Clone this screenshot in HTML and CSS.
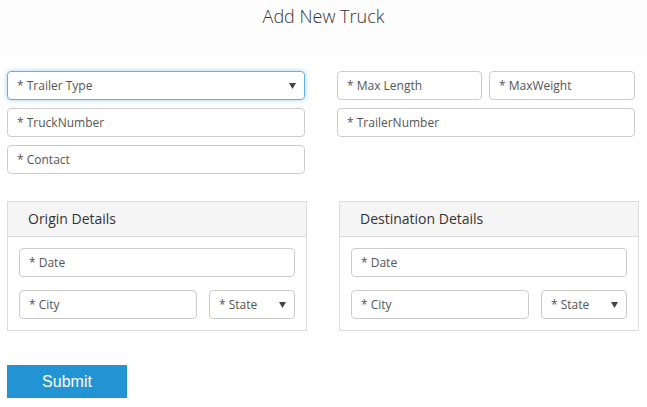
FILE: index.html
```html
<!DOCTYPE html>
<html lang="en">
<head>
<meta charset="utf-8">
<title>Add New Truck</title>
<link rel="stylesheet" href="styles.css">
</head>
<body>
<header class="title-bar">
  <h1>Add New Truck</h1>
</header>
<form class="truck-form">
  <div class="top-grid">
    <div class="col">
      <div class="field select focused"><span>* Trailer Type</span><svg class="arrow" width="7" height="6" viewBox="0 0 7 6"><path d="M0 0H7L3.5 6Z" fill="#444"/></svg></div>
      <input class="field" type="text" placeholder="* TruckNumber">
      <input class="field" type="text" placeholder="* Contact">
    </div>
    <div class="col">
      <div class="pair">
        <input class="field" type="text" placeholder="* Max Length">
        <input class="field" type="text" placeholder="* MaxWeight">
      </div>
      <input class="field" type="text" placeholder="* TrailerNumber">
    </div>
  </div>

  <div class="panel-grid">
    <section class="panel">
      <div class="panel-head">Origin Details</div>
      <div class="panel-body">
        <input class="field" type="text" placeholder="* Date">
        <div class="city-row">
          <input class="field" type="text" placeholder="* City">
          <div class="field select"><span>* State</span><svg class="arrow" width="7" height="6" viewBox="0 0 7 6"><path d="M0 0H7L3.5 6Z" fill="#444"/></svg></div>
        </div>
      </div>
    </section>
    <section class="panel">
      <div class="panel-head">Destination Details</div>
      <div class="panel-body">
        <input class="field" type="text" placeholder="* Date">
        <div class="city-row">
          <input class="field" type="text" placeholder="* City">
          <div class="field select"><span>* State</span><svg class="arrow" width="7" height="6" viewBox="0 0 7 6"><path d="M0 0H7L3.5 6Z" fill="#444"/></svg></div>
        </div>
      </div>
    </section>
  </div>

  <button class="submit" type="button">Submit</button>
</form>
</body>
</html>
```

FILE: styles.css
```css
* { box-sizing: border-box; }

html, body {
  margin: 0;
  padding: 0;
  background: #ffffff;
  font-family: "Open Sans", "DejaVu Sans", sans-serif;
  color: #333;
}

.title-bar {
  background: #fdfdfd;
  height: 54px;
  padding-top: 4px;
}

.title-bar h1 {
  margin: 0;
  text-align: center;
  font-size: 18px;
  font-weight: 300;
  line-height: 24px;
  color: #333;
}

.truck-form {
  padding: 17px 7px 0 7px;
}

.top-grid {
  display: grid;
  grid-template-columns: 298px 298px;
  column-gap: 32px;
}

.col {
  display: flex;
  flex-direction: column;
  gap: 8px;
}

.pair {
  display: grid;
  grid-template-columns: 145px 146px;
  column-gap: 7px;
}

.field {
  display: block;
  width: 100%;
  height: 29px;
  margin: 0;
  padding: 0 9px;
  border: 1px solid #ccc;
  border-radius: 4px;
  background: #fff;
  font-family: "Open Sans", "DejaVu Sans", sans-serif;
  font-size: 12px;
  color: #555;
  outline: none;
}

.field::placeholder {
  color: #555;
  opacity: 1;
}

.select {
  display: flex;
  align-items: center;
  justify-content: space-between;
  padding-right: 8px;
}

.focused {
  border-color: #66afe9;
  box-shadow: 0 0 5px rgba(102, 175, 233, 0.6);
}

.arrow {
  display: block;
  flex: none;
}

.panel-grid {
  display: grid;
  grid-template-columns: 300px 300px;
  column-gap: 32px;
  margin-top: 27px;
}

.panel {
  border: 1px solid #ddd;
}

.panel-head {
  height: 35px;
  background: #f5f5f5;
  border-bottom: 1px solid #ddd;
  padding-left: 20px;
  font-size: 14px;
  line-height: 33px;
  color: #333;
}

.panel-body {
  padding: 11px;
  display: flex;
  flex-direction: column;
  gap: 13px;
}

.city-row {
  display: grid;
  grid-template-columns: 178px 86px;
  column-gap: 12px;
}

.submit {
  display: block;
  margin-top: 34px;
  width: 120px;
  height: 33px;
  border: none;
  border-radius: 0;
  background: #2394d3;
  color: #fff;
  font-family: "Liberation Sans", Arial, sans-serif;
  font-size: 16px;
  cursor: pointer;
}
```
